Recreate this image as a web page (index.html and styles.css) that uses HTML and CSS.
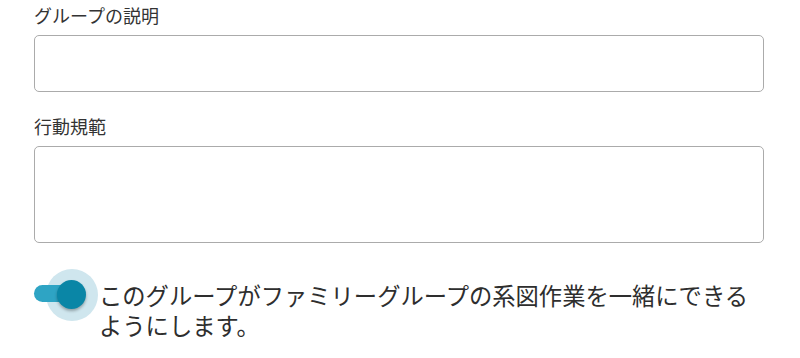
FILE: index.html
```html
<!DOCTYPE html>
<html lang="ja">
<head>
<meta charset="utf-8">
<title>グループ設定</title>
<link rel="stylesheet" href="styles.css">
</head>
<body>
<form class="form">
  <div class="field">
    <label class="label" for="desc">グループの説明</label>
    <textarea id="desc" class="box box-short"></textarea>
  </div>
  <div class="field">
    <label class="label" for="rules">行動規範</label>
    <textarea id="rules" class="box box-tall"></textarea>
  </div>
  <div class="toggle-row">
    <span class="switch" role="switch" aria-checked="true">
      <span class="halo"></span>
      <span class="track"></span>
      <span class="thumb"></span>
    </span>
    <p class="toggle-text">このグループがファミリーグループの系図作業を一緒にできるようにします。</p>
  </div>
</form>
</body>
</html>
```

FILE: styles.css
```css
html, body {
  margin: 0;
  padding: 0;
  background: #ffffff;
}

body {
  font-family: "Noto Sans CJK JP", "Noto Sans", sans-serif;
  color: #333333;
}

.form {
  padding: 3px 36px 0 34px;
  display: flex;
  flex-direction: column;
}

.field {
  display: flex;
  flex-direction: column;
}

.field + .field {
  margin-top: 22px;
}

.label {
  font-size: 18px;
  line-height: 25px;
  margin-bottom: 7px;
  color: #333333;
}

.box {
  display: block;
  box-sizing: border-box;
  width: 100%;
  margin: 0;
  padding: 8px 10px;
  border: 1.5px solid #ababab;
  border-radius: 5px;
  background: #ffffff;
  resize: none;
  font: inherit;
  outline: none;
}

.box-short {
  height: 57px;
}

.box-tall {
  height: 97px;
}

.toggle-row {
  display: flex;
  align-items: flex-start;
  margin-top: 37px;
}

.switch {
  position: relative;
  flex: none;
  width: 52px;
  height: 29px;
  margin-right: 13px;
}

.halo {
  position: absolute;
  left: 11.5px;
  top: -11.5px;
  width: 52px;
  height: 52px;
  border-radius: 50%;
  background: #cfe6ee;
}

.track {
  position: absolute;
  left: 0;
  top: 5px;
  width: 46px;
  height: 17px;
  border-radius: 8.5px;
  background: #2ea4c4;
}

.thumb {
  position: absolute;
  left: 23px;
  top: 0;
  width: 29px;
  height: 29px;
  border-radius: 50%;
  background: #0a86a6;
  box-shadow: 0 2px 3px rgba(0, 0, 0, 0.3);
}

.toggle-text {
  margin: 0;
  max-width: 660px;
  font-size: 23.3px;
  line-height: 30px;
  color: #2e2e2e;
}
```
